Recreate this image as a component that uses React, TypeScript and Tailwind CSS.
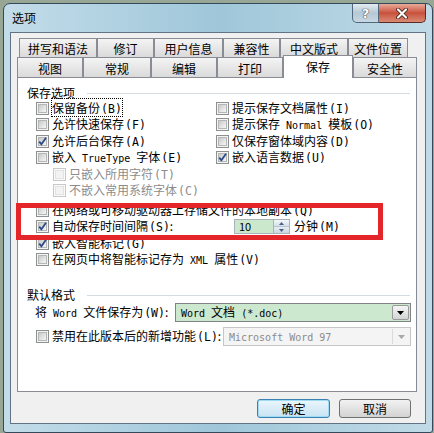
import * as React from "react";

const Mono = ({ children }: { children: React.ReactNode }) => (
  <span className="font-['DejaVu_Sans_Mono',monospace] text-[10px]">{children}</span>
);

const Acc = ({ k }: { k: string }) => (
  <span className="ml-px font-['DejaVu_Sans_Mono',monospace] text-[11.5px]">({k})</span>
);

type BoxProps = { checked?: boolean; disabled?: boolean };

const Box: React.FC<BoxProps> = ({ checked, disabled }) => (
  <span
    className={`relative flex h-[13px] w-[13px] shrink-0 items-center justify-center border ${
      disabled ? "border-[#c9c9c9] bg-[#fafafa]" : "border-[#8e8f8f] bg-[#f4f4f4]"
    }`}
  >
    <span
      className={`h-[9px] w-[9px] border ${
        disabled
          ? "border-[#e2e2e2] bg-[#f3f3f3]"
          : "border-[#b4b6b8] bg-linear-to-br from-[#c9c9c9] to-[#f7f7f7]"
      }`}
    />
    {checked && (
      <svg className="absolute left-0 top-0" width="11" height="11" viewBox="0 0 11 11">
        <path d="M2.2 5.6 L4.4 8.2 L9 1.8" fill="none" stroke="#2c4a86" strokeWidth="1.8" />
      </svg>
    )}
  </span>
);

type CheckProps = {
  checked?: boolean;
  disabled?: boolean;
  children: React.ReactNode;
  className?: string;
};

const Check: React.FC<CheckProps> = ({ checked, disabled, children, className = "" }) => (
  <div
    className={`flex h-[16.5px] items-center gap-[3px] ${disabled ? "text-[#8c8c8c]" : "text-black"} ${className}`}
  >
    <Box checked={checked} disabled={disabled} />
    <span className="whitespace-nowrap">{children}</span>
  </div>
);

const Group = ({ title, className = "" }: { title: string; className?: string }) => (
  <div className={`flex h-[14px] items-center pl-[9px] pr-[6px] ${className}`}>
    <span className="whitespace-nowrap">{title}</span>
    <div className="ml-[12px] h-px flex-1 bg-[#d3dbe2]" />
  </div>
);

const Tab = ({ label, cls, active }: { label: string; cls: string; active?: boolean }) => (
  <div
    className={`flex shrink-0 items-center justify-center border border-b-0 border-[#898c95] pt-[2px] ${
      active ? "relative z-10 -mb-px h-[23px] bg-white pb-[2px]" : "bg-linear-to-b from-[#f4f4f4] to-[#dadada]"
    } ${cls}`}
  >
    {label}
  </div>
);

const DropArrow = ({ color }: { color: string }) => (
  <svg width="7" height="4" viewBox="0 0 7 4">
    <path d="M0 0 H7 L3.5 4 Z" fill={color} />
  </svg>
);

export default function App() {
  return (
    <div className="relative h-[433px] w-[434px] overflow-hidden bg-[#98a696] pl-[3px] pt-[3px] font-['Noto_Sans_CJK_SC','Noto_Sans',sans-serif] text-[12px] leading-none">
      {/* window */}
      <div className="flex h-[430px] w-[430px] flex-col rounded-t-[7px] rounded-b-[3px] border border-[#34495a] bg-linear-to-r from-[#c3dce9] via-[#9fc7d9] to-[#c1dae7]">
        {/* title bar */}
        <div className="flex h-[28px] items-start justify-between pl-[8px] pr-[6px]">
          <span className="mt-[8px] text-[12px] text-black">选项</span>
          <div className="flex h-[19px]">
            <div className="flex w-[27px] items-center justify-center rounded-bl-[5px] border border-t-0 border-[#53687a] bg-linear-to-b from-[#e3ecf2] via-[#b5c8d5] to-[#c8d8e3]">
              <span className="font-['DejaVu_Sans',sans-serif] text-[13px] font-bold text-white [text-shadow:0_0_1px_#1f2a33,0_0_1px_#1f2a33]">
                ?
              </span>
            </div>
            <div className="flex w-[47px] items-center justify-center rounded-br-[5px] border border-l-0 border-t-0 border-[#5b2a22] bg-linear-to-b from-[#e9aa9a] via-[#c8513d] to-[#d98a74]">
              <svg width="14" height="11" viewBox="0 0 14 11">
                <path d="M3 1.5 L11 9.5 M11 1.5 L3 9.5" stroke="#3a1a14" strokeWidth="3.8" strokeLinecap="round" />
                <path d="M3 1.5 L11 9.5 M11 1.5 L3 9.5" stroke="#ffffff" strokeWidth="2.2" strokeLinecap="round" />
              </svg>
            </div>
          </div>
        </div>

        {/* client area */}
        <div className="ml-[6px] flex h-[392px] w-[416px] flex-col border border-[#617384] bg-[#f0f0f0] pl-[6px] pr-[8px] pt-[5px]">
          {/* tabs */}
          <div className="ml-[2px] flex h-[19px]">
            <Tab label="拼写和语法" cls="w-[78px] h-[19px]" />
            <Tab label="修订" cls="w-[57px] h-[19px]" />
            <Tab label="用户信息" cls="w-[69px] h-[19px]" />
            <Tab label="兼容性" cls="w-[57px] h-[19px]" />
            <Tab label="中文版式" cls="w-[68px] h-[19px]" />
            <Tab label="文件位置" cls="w-[60px] h-[19px]" />
          </div>
          <div className="flex h-[20px] items-end">
            <Tab label="视图" cls="w-[66px] h-[20px]" />
            <Tab label="常规" cls="w-[68px] h-[20px]" />
            <Tab label="编辑" cls="w-[66px] h-[20px]" />
            <Tab label="打印" cls="w-[66px] h-[20px]" />
            <Tab label="保存" cls="w-[70px]" active />
            <Tab label="安全性" cls="w-[64px] h-[20px]" />
          </div>

          {/* panel */}
          <div className="flex h-[315px] w-[400px] flex-col border border-[#898c95] bg-white pt-[8px] text-black">
            <Group title="保存选项" />
            <div className="flex pl-[18px]">
              <div className="flex w-[180px] flex-col">
                <Check>
                  <span className="outline-1 outline-dotted outline-black">
                    保留备份<Acc k="B" />
                  </span>
                </Check>
                <Check>
                  允许快速保存<Acc k="F" />
                </Check>
                <Check checked>
                  允许后台保存<Acc k="A" />
                </Check>
                <Check>
                  嵌入<Mono> TrueType </Mono>字体<Acc k="E" />
                </Check>
                <Check disabled className="pl-[17px]">
                  只嵌入所用字符<Acc k="T" />
                </Check>
                <Check disabled className="pl-[17px]">
                  不嵌入常用系统字体<Acc k="C" />
                </Check>
              </div>
              <div className="flex flex-col">
                <Check>
                  提示保存文档属性<Acc k="I" />
                </Check>
                <Check>
                  提示保存<Mono> Normal </Mono>模板<Acc k="O" />
                </Check>
                <Check>
                  仅保存窗体域内容<Acc k="D" />
                </Check>
                <Check checked>
                  嵌入语言数据<Acc k="U" />
                </Check>
              </div>
            </div>

            <div className="mt-[3px] flex flex-col pl-[18px]">
              <Check>
                在网络或可移动驱动器上存储文件的本地副本<Acc k="Q" />
              </Check>
              <div className="flex h-[16.5px] items-center">
                <div className="flex w-[196px] items-center gap-[3px]">
                  <Box checked />
                  <span className="whitespace-nowrap">
                    自动保存时间间隔<Acc k="S" />:
                  </span>
                </div>
                <div className="flex h-[15px] items-stretch">
                  <div className="ml-[2px] flex w-[40px] items-center border border-[#a9b3bc] bg-[#cbe8cd] pl-[4px] text-[11px]">
                    10
                  </div>
                  <div className="flex w-[16px] flex-col border border-l-0 border-[#a9b3bc]">
                    <div className="flex flex-1 items-center justify-center border-b border-[#b7c4d0] bg-linear-to-b from-[#f5f8fb] to-[#d4dfe9]">
                      <svg width="5" height="3" viewBox="0 0 5 3">
                        <path d="M0 3 H5 L2.5 0 Z" fill="#4d6185" />
                      </svg>
                    </div>
                    <div className="flex flex-1 items-center justify-center bg-linear-to-b from-[#e8eef4] to-[#c9d6e2]">
                      <svg width="5" height="3" viewBox="0 0 5 3">
                        <path d="M0 0 H5 L2.5 3 Z" fill="#4d6185" />
                      </svg>
                    </div>
                  </div>
                </div>
                <span className="ml-[4px] whitespace-nowrap">
                  分钟<Acc k="M" />
                </span>
              </div>
              <Check checked>
                嵌入智能标记<Acc k="G" />
              </Check>
              <Check>
                在网页中将智能标记存为<Mono> XML </Mono>属性<Acc k="V" />
              </Check>
            </div>

            <Group title="默认格式" className="mt-[20px]" />
            <div className="mt-[1px] flex h-[19px] items-center pl-[17px] pr-[5px]">
              <span className="w-[140px] whitespace-nowrap">
                将<Mono> Word </Mono>文件保存为<Acc k="W" />:
              </span>
              <div className="flex h-[19px] flex-1 items-center border border-[#7f8388] bg-[#cce8cf] pl-[5px] pr-px">
                <span className="flex-1 whitespace-nowrap">
                  <Mono>Word </Mono>文档<Mono> (*.doc)</Mono>
                </span>
                <div className="flex h-[15px] w-[17px] items-center justify-center rounded-[2px] border border-[#9a9a9a] bg-linear-to-b from-[#f6f6f6] to-[#d3d3d3]">
                  <DropArrow color="#000000" />
                </div>
              </div>
            </div>
            <div className="mt-[5px] flex h-[19px] items-center pl-[18px] pr-[5px]">
              <div className="flex w-[187px] items-center gap-[3px]">
                <Box />
                <span className="whitespace-nowrap">
                  禁用在此版本后的新增功能<Acc k="L" />:
                </span>
              </div>
              <div className="flex h-[19px] flex-1 items-center border border-[#c6c6c6] bg-[#f4f4f4] pl-[5px] pr-px text-[#8b8b8b]">
                <span className="flex-1 whitespace-nowrap">
                  <Mono>Microsoft Word 97</Mono>
                </span>
                <div className="flex h-[15px] w-[17px] items-center justify-center border-l border-[#dadada]">
                  <DropArrow color="#a8a8a8" />
                </div>
              </div>
            </div>
          </div>

          {/* buttons */}
          <div className="mt-[7px] flex justify-end gap-[9px] pr-[6px]">
            <button
              type="button"
              className="flex h-[19px] w-[73px] items-center justify-center rounded-[3px] border border-[#3c7fb1] bg-linear-to-b from-[#eaf6fd] to-[#c9e3f3] text-black shadow-[inset_0_0_0_1px_#9edcf5]"
            >
              确定
            </button>
            <button
              type="button"
              className="flex h-[19px] w-[72px] items-center justify-center rounded-[3px] border border-[#707070] bg-linear-to-b from-[#f2f2f2] to-[#d3d3d3] text-black"
            >
              取消
            </button>
          </div>
        </div>
      </div>

      {/* red annotation box */}
      <div className="absolute left-[16px] top-[203px] h-[37px] w-[367px] border-[5px] border-[#e4262b]" />
    </div>
  );
}
